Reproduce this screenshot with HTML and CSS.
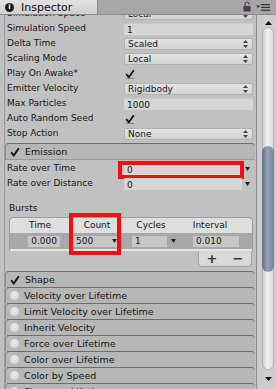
FILE: index.html
```html
<!DOCTYPE html>
<html>
<head>
    <title>Inspector</title>
    <link rel="stylesheet" href="styles.css">
</head>
<body>
    <div class="window">
        <div class="tabbar">
            <div class="tab">
                <span class="info-icon">i</span>
                <span>Inspector</span>
            </div>
            <div class="tab-tools">
                <svg class="lock" width="8" height="11" viewBox="0 0 8 11">
                    <path d="M2 5 V3 A2 2 0 0 1 6 3 V3.5" fill="none" stroke="#4a3b4a" stroke-width="1.2"/>
                    <rect x="0.5" y="5" width="7" height="5.5" rx="0.5" fill="#4a3b4a"/>
                </svg>
                <svg class="menu" width="15" height="8" viewBox="0 0 15 8">
                    <path d="M0 2.5 H4 L2 5 Z" fill="#333"/>
                    <rect x="5" y="1" width="9" height="1.2" fill="#333"/>
                    <rect x="5" y="3.8" width="9" height="1.2" fill="#333"/>
                    <rect x="5" y="6.6" width="9" height="1.2" fill="#333"/>
                </svg>
            </div>
        </div>

        <div class="main">
            <div class="content">
                <div class="inspector">
                    <!-- main module properties -->
                    <div class="props first">
                        <div class="row"><span>Simulation Space</span><div class="field popup"><span>Local</span><svg class="updown" width="5" height="8" viewBox="0 0 5 8"><path d="M0 3 L2.5 0 L5 3 Z M0 5 L2.5 8 L5 5 Z" fill="#444"/></svg></div></div>
                        <div class="row"><span>Simulation Speed</span><div class="field">1</div></div>
                        <div class="row"><span>Delta Time</span><div class="field popup"><span>Scaled</span><svg class="updown" width="5" height="8" viewBox="0 0 5 8"><path d="M0 3 L2.5 0 L5 3 Z M0 5 L2.5 8 L5 5 Z" fill="#444"/></svg></div></div>
                        <div class="row"><span>Scaling Mode</span><div class="field popup"><span>Local</span><svg class="updown" width="5" height="8" viewBox="0 0 5 8"><path d="M0 3 L2.5 0 L5 3 Z M0 5 L2.5 8 L5 5 Z" fill="#444"/></svg></div></div>
                        <div class="row"><span>Play On Awake*</span><div class="check"><svg width="10" height="10" viewBox="0 0 10 10"><path d="M1.2 5.2 L3.8 8.2 L8.8 1.2" fill="none" stroke="#111" stroke-width="1.8"/><path d="M0.5 9.5 H9.5" stroke="#777" stroke-width="0.8"/></svg></div></div>
                        <div class="row"><span>Emitter Velocity</span><div class="field popup"><span>Rigidbody</span><svg class="updown" width="5" height="8" viewBox="0 0 5 8"><path d="M0 3 L2.5 0 L5 3 Z M0 5 L2.5 8 L5 5 Z" fill="#444"/></svg></div></div>
                        <div class="row"><span>Max Particles</span><div class="field">1000</div></div>
                        <div class="row"><span>Auto Random Seed</span><div class="check"><svg width="10" height="10" viewBox="0 0 10 10"><path d="M1.2 5.2 L3.8 8.2 L8.8 1.2" fill="none" stroke="#111" stroke-width="1.8"/><path d="M0.5 9.5 H9.5" stroke="#777" stroke-width="0.8"/></svg></div></div>
                        <div class="row"><span>Stop Action</span><div class="field popup"><span>None</span><svg class="updown" width="5" height="8" viewBox="0 0 5 8"><path d="M0 3 L2.5 0 L5 3 Z M0 5 L2.5 8 L5 5 Z" fill="#444"/></svg></div></div>
                    </div>

                    <!-- Emission module -->
                    <div class="module open emission">
                        <svg class="tick" width="10" height="10" viewBox="0 0 10 10"><path d="M1.2 5.2 L3.8 8.4 L8.8 1.2" fill="none" stroke="#111" stroke-width="1.8"/></svg>
                        <span>Emission</span>
                    </div>
                    <div class="props">
                        <div class="row">
                            <span>Rate over Time</span>
                            <div class="curve">
                                <div class="field">0</div>
                                <svg class="drop" width="5" height="4" viewBox="0 0 5 4"><path d="M0 0 H5 L2.5 4 Z" fill="#222"/></svg>
                                <div class="highlight rate-mark"></div>
                            </div>
                        </div>
                        <div class="row">
                            <span>Rate over Distance</span>
                            <div class="curve">
                                <div class="field">0</div>
                                <svg class="drop" width="5" height="4" viewBox="0 0 5 4"><path d="M0 0 H5 L2.5 4 Z" fill="#222"/></svg>
                            </div>
                        </div>
                    </div>

                    <div class="bursts">
                        <div class="bursts-label">Bursts</div>
                        <div class="burst-table">
                            <div class="burst-head">
                                <span>Time</span>
                                <span>Count</span>
                                <span>Cycles</span>
                                <span>Interval</span>
                            </div>
                            <div class="burst-row">
                                <div class="bf time">0.000</div>
                                <div class="bf count"><span>500</span><svg width="5" height="4" viewBox="0 0 5 4"><path d="M0 0 H5 L2.5 4 Z" fill="#222"/></svg></div>
                                <div class="bf cycles"><span>1</span></div>
                                <div class="bf-arrow"><svg width="5" height="4" viewBox="0 0 5 4"><path d="M0 0 H5 L2.5 4 Z" fill="#222"/></svg></div>
                                <div class="bf interval">0.010</div>
                            </div>
                            <div class="highlight count-mark"></div>
                        </div>
                        <div class="burst-foot">
                            <div class="plus-minus"><span>+</span><span>&minus;</span></div>
                        </div>
                    </div>

                    <!-- module list -->
                    <div class="modules">
                        <div class="module">
                            <svg class="tick" width="10" height="10" viewBox="0 0 10 10"><path d="M1.2 5.2 L3.8 8.4 L8.8 1.2" fill="none" stroke="#111" stroke-width="1.8"/></svg>
                            <span>Shape</span>
                        </div>
                        <div class="module"><span class="toggle"></span><span>Velocity over Lifetime</span></div>
                        <div class="module"><span class="toggle"></span><span>Limit Velocity over Lifetime</span></div>
                        <div class="module"><span class="toggle"></span><span>Inherit Velocity</span></div>
                        <div class="module"><span class="toggle"></span><span>Force over Lifetime</span></div>
                        <div class="module"><span class="toggle"></span><span>Color over Lifetime</span></div>
                        <div class="module"><span class="toggle"></span><span>Color by Speed</span></div>
                        <div class="module"><span class="toggle"></span><span>Size over Lifetime</span></div>
                    </div>
                </div>
            </div>

            <div class="scrollbar">
                <svg class="arrow-up" width="7" height="4" viewBox="0 0 7 4"><path d="M0 4 L3.5 0 L7 4 Z" fill="#111"/></svg>
                <div class="track">
                    <div class="thumb"></div>
                </div>
                <svg class="arrow-down" width="7" height="4" viewBox="0 0 7 4"><path d="M0 0 L3.5 4 L7 0 Z" fill="#111"/></svg>
            </div>
        </div>
    </div>
</body>
</html>
```

FILE: styles.css
```css
body {
    margin: 0;
    font-family: 'DejaVu Sans', sans-serif;
    font-size: 9px;
    color: #151515;
    background: #c1c1c1;
}

.window {
    width: 276px;
    height: 389px;
    display: flex;
    flex-direction: column;
    overflow: hidden;
    background: #c1c1c1;
}

/* tab bar */
.tabbar {
    height: 15px;
    flex: none;
    display: flex;
    justify-content: space-between;
    background: #a6a6a6;
    border-bottom: 1px solid #8a8a8a;
    box-sizing: border-box;
}

.tab {
    width: 98px;
    display: flex;
    align-items: center;
    gap: 7px;
    padding-left: 5px;
    box-sizing: border-box;
    font-size: 11px;
    color: #111;
    background: linear-gradient(#e2e2e2, #d0d0d0);
    border-right: 1px solid #8a8a8a;
}

.info-icon {
    width: 9px;
    height: 9px;
    border-radius: 50%;
    background: #1a1a1a;
    color: #fff;
    font-size: 7px;
    font-weight: bold;
    line-height: 9px;
    text-align: center;
}

.tab-tools {
    display: flex;
    align-items: center;
    gap: 5px;
    padding-right: 5px;
}

.lock {
    margin-top: -2px;
}

/* body */
.main {
    flex: 1;
    display: flex;
    min-height: 0;
}

.content {
    flex: 1;
    overflow: hidden;
}

.inspector {
    margin-left: 4px;
    border-left: 1px solid #9a9a9a;
    min-height: 100%;
}

.props {
    padding: 0 3px 0 2px;
}

.props.first {
    margin-top: -9px;
}

.row {
    height: 15px;
    display: grid;
    grid-template-columns: 117px 1fr;
    align-items: center;
    line-height: 15px;
}

.field {
    height: 12px;
    line-height: 12px;
    padding-left: 3px;
    background: #d6d6d6;
    border-top: 1px solid #cbcbcb;
    box-sizing: border-box;
}

.field.popup {
    display: flex;
    justify-content: space-between;
    align-items: center;
    padding-right: 4px;
    border-radius: 2px;
    border: 1px solid #b2b2b2;
    background: linear-gradient(#e4e4e4, #d2d2d2);
}

.check {
    display: flex;
    align-items: center;
    padding-left: 1px;
}

.curve {
    position: relative;
    display: grid;
    grid-template-columns: 1fr 11px;
    align-items: center;
}

.drop {
    justify-self: center;
}

.highlight {
    position: absolute;
    border: 4px solid #f01010;
    pointer-events: none;
}

.rate-mark {
    left: -6px;
    top: -2px;
    width: 126px;
    height: 18px;
    box-sizing: border-box;
}

/* module headers */
.module {
    height: 16px;
    display: flex;
    align-items: center;
    gap: 5px;
    padding-left: 3px;
    margin-right: 1px;
    box-sizing: border-box;
    background: #b7b7b7;
    border-top: 1px solid #6e6e6e;
    border-left: 1px solid #8a8a8a;
    border-radius: 4px 4px 0 0;
    font-size: 9.5px;
}

.module.emission {
    margin-top: 2px;
    margin-bottom: 1px;
    border-bottom: 1px solid #9a9a9a;
    height: 17px;
}

.tick {
    margin-left: 1px;
}

.toggle {
    width: 9px;
    height: 9px;
    margin-left: 1px;
    border-radius: 50%;
    background: radial-gradient(circle at 50% 40%, #ececec, #d2d2d2);
}

/* bursts */
.bursts {
    padding: 10px 3px 4px 4px;
}

.bursts-label {
    height: 14px;
    line-height: 14px;
}

.burst-table {
    position: relative;
    margin-top: 2px;
    border: 1px solid #9d9d9d;
    border-bottom: none;
    border-radius: 4px 4px 0 0;
}

.burst-head {
    height: 15px;
    display: grid;
    grid-template-columns: 60px 54px 54px 64px;
    line-height: 15px;
    text-align: center;
    background: #dedede;
    border-radius: 4px 4px 0 0;
}

.burst-row {
    height: 18px;
    display: flex;
    align-items: center;
    padding-left: 18px;
    background: #a8a8a8;
    border-bottom: 2px solid #e6e6e6;
    box-sizing: border-box;
}

.bf {
    height: 11px;
    line-height: 11px;
    background: #c7c7c7;
    padding: 0 3px;
    box-sizing: border-box;
}

.bf.time {
    width: 32px;
    text-align: right;
    margin-right: 13px;
}

.bf.count {
    width: 47px;
    display: flex;
    justify-content: space-between;
    align-items: center;
    margin-right: 12px;
}

.bf.cycles {
    width: 35px;
}

.bf-arrow {
    width: 23px;
    display: flex;
    justify-content: center;
    padding-right: 10px;
    margin-right: 3px;
    box-sizing: border-box;
}

.bf.interval {
    width: 46px;
}

.count-mark {
    left: 59px;
    top: -5px;
    width: 52px;
    height: 42px;
    box-sizing: border-box;
}

.burst-foot {
    display: flex;
    justify-content: flex-end;
    padding-right: 1px;
}

.plus-minus {
    width: 54px;
    height: 16px;
    display: flex;
    justify-content: space-around;
    align-items: center;
    background: #d9d9d9;
    border: 1px solid #a2a2a2;
    border-top: none;
    border-radius: 0 0 4px 4px;
    box-sizing: border-box;
    font-size: 13px;
    font-weight: bold;
    color: #333;
}

/* scrollbar */
.scrollbar {
    width: 20px;
    flex: none;
    display: flex;
    flex-direction: column;
    align-items: flex-start;
    background: #cdcdcd;
    border-left: 1px solid #8c8c8c;
    box-sizing: border-box;
}

.arrow-up {
    margin: 6px 0 2px 8px;
}

.track {
    flex: 1;
    width: 12px;
    margin-left: 5px;
    box-sizing: border-box;
    border: 1px solid #b3b3b3;
    border-radius: 6px;
    background: linear-gradient(90deg, #d0d0d0, #f2f2f2 45%, #dedede);
    padding-top: 118px;
}

.thumb {
    height: 126px;
    margin: 0 -1px;
    border-radius: 6px;
    background: linear-gradient(90deg, #5f6f88, #98a4b8 45%, #73829a);
}

.arrow-down {
    margin: 7px 0 8px 8px;
}
```
